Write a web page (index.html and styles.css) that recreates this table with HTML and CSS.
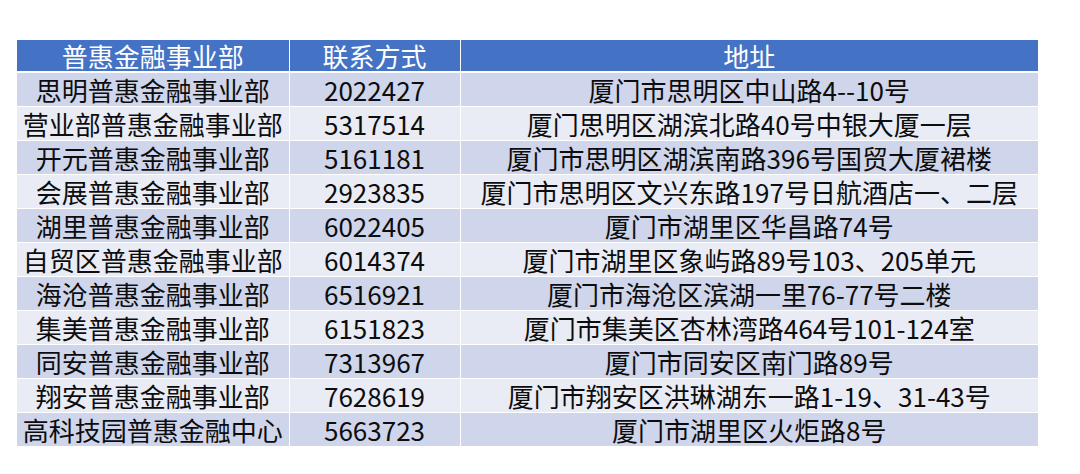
FILE: index.html
```html
<!DOCTYPE html>
<html lang="zh">
<head>
<meta charset="utf-8">
<title>普惠金融事业部</title>
<link rel="stylesheet" href="styles.css">
</head>
<body>
<div class="page">
<table class="dept-table">
  <colgroup>
    <col class="c1"><col class="c2"><col class="c3">
  </colgroup>
  <thead>
    <tr><th>普惠金融事业部</th><th>联系方式</th><th>地址</th></tr>
  </thead>
  <tbody>
    <tr><td>思明普惠金融事业部</td><td>2022427</td><td>厦门市思明区中山路4--10号</td></tr>
    <tr><td>营业部普惠金融事业部</td><td>5317514</td><td>厦门思明区湖滨北路40号中银大厦一层</td></tr>
    <tr><td>开元普惠金融事业部</td><td>5161181</td><td>厦门市思明区湖滨南路396号国贸大厦裙楼</td></tr>
    <tr><td>会展普惠金融事业部</td><td>2923835</td><td>厦门市思明区文兴东路197号日航酒店一、二层</td></tr>
    <tr><td>湖里普惠金融事业部</td><td>6022405</td><td>厦门市湖里区华昌路74号</td></tr>
    <tr><td>自贸区普惠金融事业部</td><td>6014374</td><td>厦门市湖里区象屿路89号103、205单元</td></tr>
    <tr><td>海沧普惠金融事业部</td><td>6516921</td><td>厦门市海沧区滨湖一里76-77号二楼</td></tr>
    <tr><td>集美普惠金融事业部</td><td>6151823</td><td>厦门市集美区杏林湾路464号101-124室</td></tr>
    <tr><td>同安普惠金融事业部</td><td>7313967</td><td>厦门市同安区南门路89号</td></tr>
    <tr><td>翔安普惠金融事业部</td><td>7628619</td><td>厦门市翔安区洪琳湖东一路1-19、31-43号</td></tr>
    <tr><td>高科技园普惠金融中心</td><td>5663723</td><td>厦门市湖里区火炬路8号</td></tr>
  </tbody>
</table>
</div>
</body>
</html>
```
FILE: styles.css
```css
html, body {
  margin: 0;
  padding: 0;
  background: #ffffff;
}
.page {
  padding: 40px 0 0 17px;
}
.dept-table {
  border-collapse: collapse;
  table-layout: fixed;
  width: 1021px;
  font-family: "Noto Sans CJK SC", sans-serif;
  font-size: 26px;
  color: #0d0d0d;
}
.c1 { width: 272px; }
.c2 { width: 171px; }
.c3 { width: 578px; }
.dept-table th,
.dept-table td {
  padding: 0;
  text-align: center;
  white-space: nowrap;
  border: 1px solid #ffffff;
  line-height: 1;
}
.dept-table th {
  background: #4472c4;
  color: #ffffff;
  font-weight: normal;
  height: 31px;
  border-top: none;
  border-bottom: 2px solid #ffffff;
}
.dept-table td {
  height: 33px;
}
.dept-table th:first-child,
.dept-table td:first-child { border-left: none; }
.dept-table th:last-child,
.dept-table td:last-child { border-right: none; }
.dept-table tbody tr:last-child td { border-bottom: none; }
.dept-table tbody tr:nth-child(odd) td { background: #cfd5ea; }
.dept-table tbody tr:nth-child(even) td { background: #e9ebf5; }
```
